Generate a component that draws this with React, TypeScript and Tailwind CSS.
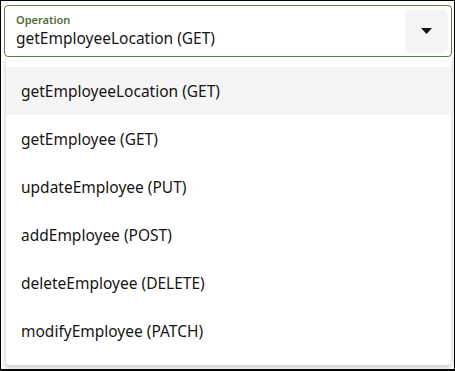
import React from "react";

const items = [
  "getEmployeeLocation (GET)",
  "getEmployee (GET)",
  "updateEmployee (PUT)",
  "addEmployee (POST)",
  "deleteEmployee (DELETE)",
  "modifyEmployee (PATCH)",
];

export default function App() {
  return (
    <div
      className="w-[455px] h-[371px] bg-white border border-black border-b-2 overflow-hidden flex flex-col"
      style={{ fontFamily: '"Noto Sans", "Open Sans", sans-serif' }}
    >
      <div className="pt-[4px] pl-[3px] pr-[2px]">
        <div className="h-[52px] w-[448px] border border-[#5e7d4a] rounded-[4px] flex items-center justify-between pl-[11px] pr-[3px]">
          <div className="flex flex-col">
            <span className="text-[11px] leading-[14px] font-semibold text-[#4e6e3a]">Operation</span>
            <span className="text-[15.5px] leading-[22px] text-[#161513]">getEmployeeLocation (GET)</span>
          </div>
          <div className="w-[43px] h-[43px] bg-[#f4f4f4] rounded-[5px] flex items-center justify-center">
            <svg width="11" height="6" viewBox="0 0 11 6">
              <polygon points="0,0 11,0 5.5,6" fill="#161513" />
            </svg>
          </div>
        </div>
      </div>
      <div className="flex">
        <div className="ml-[4px] mt-[1px] w-[446px] h-[307px] bg-white border-l border-[#e6e6e6] rounded-b-[4px] shadow-[0_3px_4px_rgba(0,0,0,0.18)] pt-[9px] pb-[8px]">
          {items.map((t, i) => (
            <div
              key={t}
              className={`h-[48px] flex items-center pl-[15px] pt-[2px] text-[15.5px] text-[#161513] ${i === 0 ? "bg-[#f5f5f5]" : ""}`}
            >
              {t}
            </div>
          ))}
        </div>
        <div className="ml-[1px] w-[2px] h-[307px] bg-[#ececec]" />
      </div>
    </div>
  );
}
